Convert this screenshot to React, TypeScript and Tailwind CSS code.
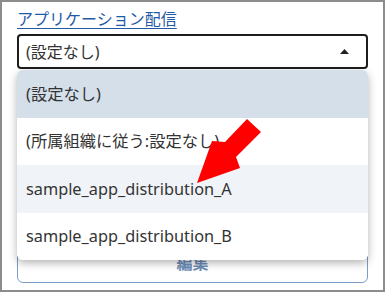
import React from "react"

const options = [
  { label: "(設定なし)", bg: "bg-[#d5dfea]" },
  { label: "(所属組織に従う:設定なし)", bg: "bg-white" },
  { label: "sample_app_distribution_A", bg: "bg-[#f0f3f7]" },
  { label: "sample_app_distribution_B", bg: "bg-white" },
]

const App: React.FC = () => {
  return (
    <div
      className="relative h-[292px] w-[385px] overflow-hidden border-2 border-[#8c8c8c] bg-white text-[16px] text-[#333]"
      style={{ fontFamily: '"Noto Sans", "Noto Sans CJK JP", sans-serif' }}
    >
      <div className="flex flex-col px-[15px] pt-[5px]">
        <a className="self-start text-[16px] leading-6 text-[#1f5aa6] underline underline-offset-[3px]" href="#">
          アプリケーション配信
        </a>
        <div className="mt-[3px] flex h-[35px] items-center justify-between rounded-[4px] border-2 border-[#1d1d1d] pl-[7px] pr-[17px]">
          <span>(設定なし)</span>
          <svg width="9" height="5" viewBox="0 0 9 5">
            <polygon points="0,5 9,5 4.5,0" fill="#222" />
          </svg>
        </div>
        <button className="mt-[174px] flex h-[40px] items-center justify-center rounded-[6px] border border-[#7a9cc6] font-bold text-[#6d8db5]">
          編集
        </button>
      </div>

      <ul className="absolute left-[15px] top-[68px] w-[351px] overflow-hidden rounded-[6px] bg-white text-[16.3px] shadow-[0_3px_8px_rgba(0,0,0,0.3)]">
        {options.map(o => (
          <li key={o.label} className={`flex h-[47.5px] items-center px-[9px] ${o.bg}`}>
            {o.label}
          </li>
        ))}
      </ul>

      {/* red pointer arrow */}
      <svg className="absolute left-0 top-0" width="385" height="292" viewBox="2 2 385 292">
        <polygon points="247,119 261,132 236,157 240,168 197,183 212,141 225,142" fill="#ff0000" />
      </svg>
    </div>
  )
}

export default App
